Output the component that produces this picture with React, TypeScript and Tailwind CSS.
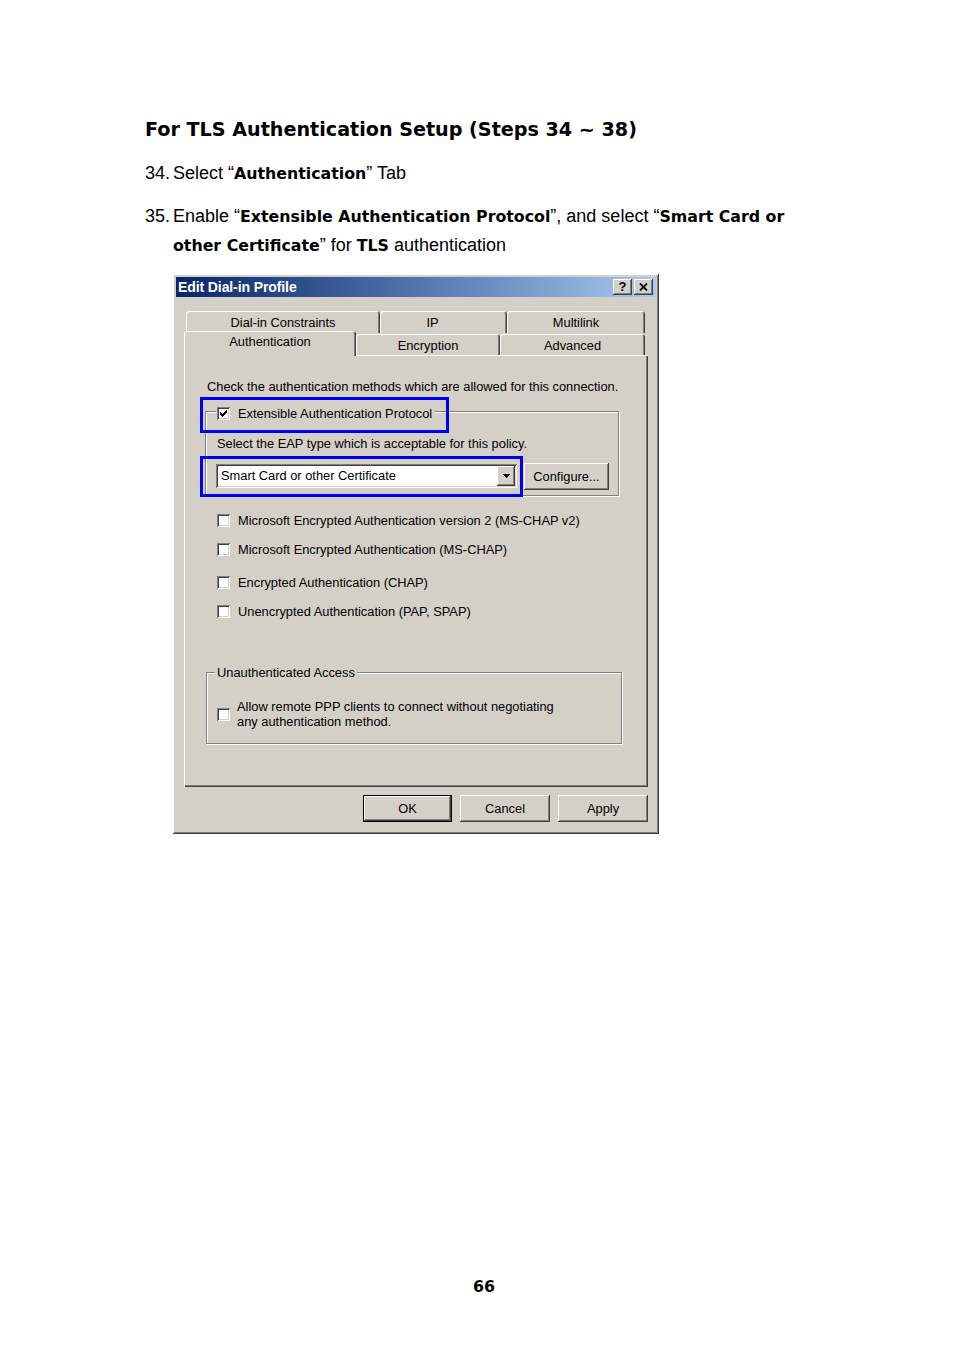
import type { ReactNode } from "react";

const raised =
  "shadow-[inset_-1px_-1px_#404040,inset_1px_1px_#ffffff,inset_-2px_-2px_#808080,inset_2px_2px_#d4d0c8]";
const sunken =
  "shadow-[inset_1px_1px_#808080,inset_-1px_-1px_#ffffff,inset_2px_2px_#404040,inset_-2px_-2px_#d4d0c8]";

const docRegular = "font-['Liberation_Sans',sans-serif] text-[18px]";
const docBold = "font-['DejaVu_Sans',sans-serif] font-bold text-[15.8px]";

function B({ children }: { children: ReactNode }) {
  return <span className={docBold}>{children}</span>;
}

function Checkbox({ checked = false }: { checked?: boolean }) {
  return (
    <span className={`relative block h-[13px] w-[13px] shrink-0 bg-white ${sunken}`}>
      {checked && (
        <svg className="absolute left-[3px] top-[3px]" width="7" height="7" viewBox="0 0 7 7" shapeRendering="crispEdges">
          <path
            d="M6 0h1v3h-1v1h-1v1h-1v1h-1v1h-1v-1h-1v-1h-1v-3h1v1h1v1h1v-1h1v-1h1v-1h1z"
            fill="#000"
          />
        </svg>
      )}
    </span>
  );
}

function Tab({
  label,
  w,
  h,
  selected = false,
  extra = "",
}: {
  label: string;
  w: number;
  h: number;
  selected?: boolean;
  extra?: string;
}) {
  return (
    <div
      style={{ width: w, height: h }}
      className={`flex shrink-0 items-start justify-center rounded-t-[3px] bg-[#d4d0c8] shadow-[inset_1px_1px_#ffffff,inset_-1px_0_#404040,inset_-2px_0_#808080] ${
        selected ? "relative top-[1px] z-10 pt-[4px]" : "pt-[5px]"
      } ${extra}`}
    >
      <span className="leading-[14px]">{label}</span>
    </div>
  );
}

function Button({ label, w, isDefault = false }: { label: string; w: number; isDefault?: boolean }) {
  return (
    <div
      style={{ width: w }}
      className={`flex h-[27px] items-center justify-center bg-[#d4d0c8] ${
        isDefault
          ? "shadow-[inset_0_0_0_1px_#000000,inset_-2px_-2px_#404040,inset_2px_2px_#ffffff,inset_-3px_-3px_#808080]"
          : raised
      }`}
    >
      {label}
    </div>
  );
}

export default function App() {
  return (
    <div className="min-h-[1351px] w-[954px] bg-white pl-[145px] pt-[118px] text-black">
      <h1 className="font-['DejaVu_Sans',sans-serif] text-[19.15px] font-bold leading-[24px]">
        For TLS Authentication Setup (Steps 34 ~ 38)
      </h1>

      <div className={`mt-[17px] flex leading-[29px] ${docRegular}`}>
        <span className="w-[28px] shrink-0">34.</span>
        <span>
          Select “<B>Authentication</B>” Tab
        </span>
      </div>

      <div className={`mt-[14px] flex leading-[29px] ${docRegular}`}>
        <span className="w-[28px] shrink-0">35.</span>
        <span>
          Enable “<B>Extensible Authentication Protocol</B>”, and select “<B>Smart Card or</B>
          <br />
          <B>other Certificate</B>” for <B>TLS</B> authentication
        </span>
      </div>

      {/* dialog */}
      <div
        className={`ml-[28px] mt-[14px] flex h-[560px] w-[486px] flex-col bg-[#d4d0c8] p-[3px] font-['Liberation_Sans',sans-serif] text-[12.85px] text-black ${raised}`}
      >
        <div className="flex h-[20px] items-center justify-between bg-gradient-to-r from-[#0a246a] to-[#a6caf0] pl-[2px] pr-[3px]">
          <span className="text-[14px] font-bold tracking-[-0.1px] text-white">Edit Dial-in Profile</span>
          <div className="flex gap-[2px]">
            <div className={`flex h-[16px] w-[19px] items-center justify-center bg-[#d4d0c8] text-[13px] font-bold ${raised}`}>
              ?
            </div>
            <div className={`flex h-[16px] w-[19px] items-center justify-center bg-[#d4d0c8] ${raised}`}>
              <svg width="9" height="8" viewBox="0 0 9 8">
                <path d="M1 0.5 L8 7.5 M8 0.5 L1 7.5" stroke="#000" strokeWidth="1.8" />
              </svg>
            </div>
          </div>
        </div>

        <div className="px-[8px] pt-[14px]">
          <div className="ml-[2px] flex h-[22px]">
            <Tab label="Dial-in Constraints" w={194} h={22} />
            <Tab label="IP" w={127} h={22} extra="pr-[22px]" />
            <Tab label="Multilink" w={138} h={22} />
          </div>
          <div className="flex h-[22px] items-end">
            <Tab label="Authentication" w={172} h={25} selected />
            <Tab label="Encryption" w={144} h={21} />
            <Tab label="Advanced" w={145} h={21} />
          </div>

          {/* tab panel */}
          <div className="relative h-[432px] w-[464px] pt-[24px] shadow-[inset_1px_1px_#ffffff,inset_-1px_-1px_#404040,inset_-2px_-2px_#808080]">
            <p className="ml-[23px] leading-[15px]">Check the authentication methods which are allowed for this connection.</p>

            <div className="relative ml-[21px] mt-[17px] h-[85px] w-[414px] border border-[#808080] shadow-[inset_1px_1px_#ffffff,1px_1px_#ffffff]">
              <div className="absolute left-[10px] top-[-6px] flex items-center gap-[8px] bg-[#d4d0c8] pl-[1px] pr-[3px]">
                <Checkbox checked />
                <span className="leading-[15px]">Extensible Authentication Protocol</span>
              </div>
              <p className="ml-[11px] mt-[24px] leading-[15px]">Select the EAP type which is acceptable for this policy.</p>
              <div className="ml-[10px] mt-[13px] flex items-start gap-[7px]">
                <div className={`flex h-[24px] w-[301px] items-center justify-between bg-white pl-[5px] pr-[2px] ${sunken}`}>
                  <span>Smart Card or other Certificate</span>
                  <div className={`flex h-[20px] w-[18px] items-center justify-center bg-[#d4d0c8] ${raised}`}>
                    <svg width="7" height="4" viewBox="0 0 7 4" shapeRendering="crispEdges">
                      <path d="M0 0h7v1h-1v1h-1v1h-1v1h-1v-1h-1v-1h-1v-1h-1z" fill="#000" />
                    </svg>
                  </div>
                </div>
                <div className={`-mt-[1px] flex h-[27px] w-[85px] items-center justify-center bg-[#d4d0c8] ${raised}`}>
                  Configure...
                </div>
              </div>
            </div>

            <div className="ml-[33px] mt-[18px] flex flex-col">
              <div className="flex h-[13px] items-center gap-[8px]">
                <Checkbox />
                <span>Microsoft Encrypted Authentication version 2 (MS-CHAP v2)</span>
              </div>
              <div className="mt-[16px] flex h-[13px] items-center gap-[8px]">
                <Checkbox />
                <span>Microsoft Encrypted Authentication (MS-CHAP)</span>
              </div>
              <div className="mt-[20px] flex h-[13px] items-center gap-[8px]">
                <Checkbox />
                <span>Encrypted Authentication (CHAP)</span>
              </div>
              <div className="mt-[16px] flex h-[13px] items-center gap-[8px]">
                <Checkbox />
                <span>Unencrypted Authentication (PAP, SPAP)</span>
              </div>
            </div>

            <div className="relative ml-[22px] mt-[54px] h-[72px] w-[416px] border border-[#808080] shadow-[inset_1px_1px_#ffffff,1px_1px_#ffffff]">
              <span className="absolute left-[8px] top-[-8px] bg-[#d4d0c8] px-[2px] leading-[15px]">Unauthenticated Access</span>
              <div className="ml-[10px] mt-[26px] flex items-center gap-[7px]">
                <Checkbox />
                <span className="leading-[15px]">
                  Allow remote PPP clients to connect without negotiating
                  <br />
                  any authentication method.
                </span>
              </div>
            </div>

            {/* highlight frames */}
            <div className="absolute left-[16px] top-[42px] h-[36px] w-[249px] border-[3px] border-[#0000f0]" />
            <div className="absolute left-[16px] top-[101px] h-[41px] w-[323px] border-[3px] border-[#0000f0]" />
          </div>

          <div className="mt-[8px] flex justify-end gap-[8px]">
            <Button label="OK" w={89} isDefault />
            <Button label="Cancel" w={90} />
            <Button label="Apply" w={90} />
          </div>
        </div>
      </div>

      <div className="ml-[328px] mt-[443px] font-['DejaVu_Sans',sans-serif] text-[15.8px] font-bold leading-[20px]">66</div>
    </div>
  );
}
